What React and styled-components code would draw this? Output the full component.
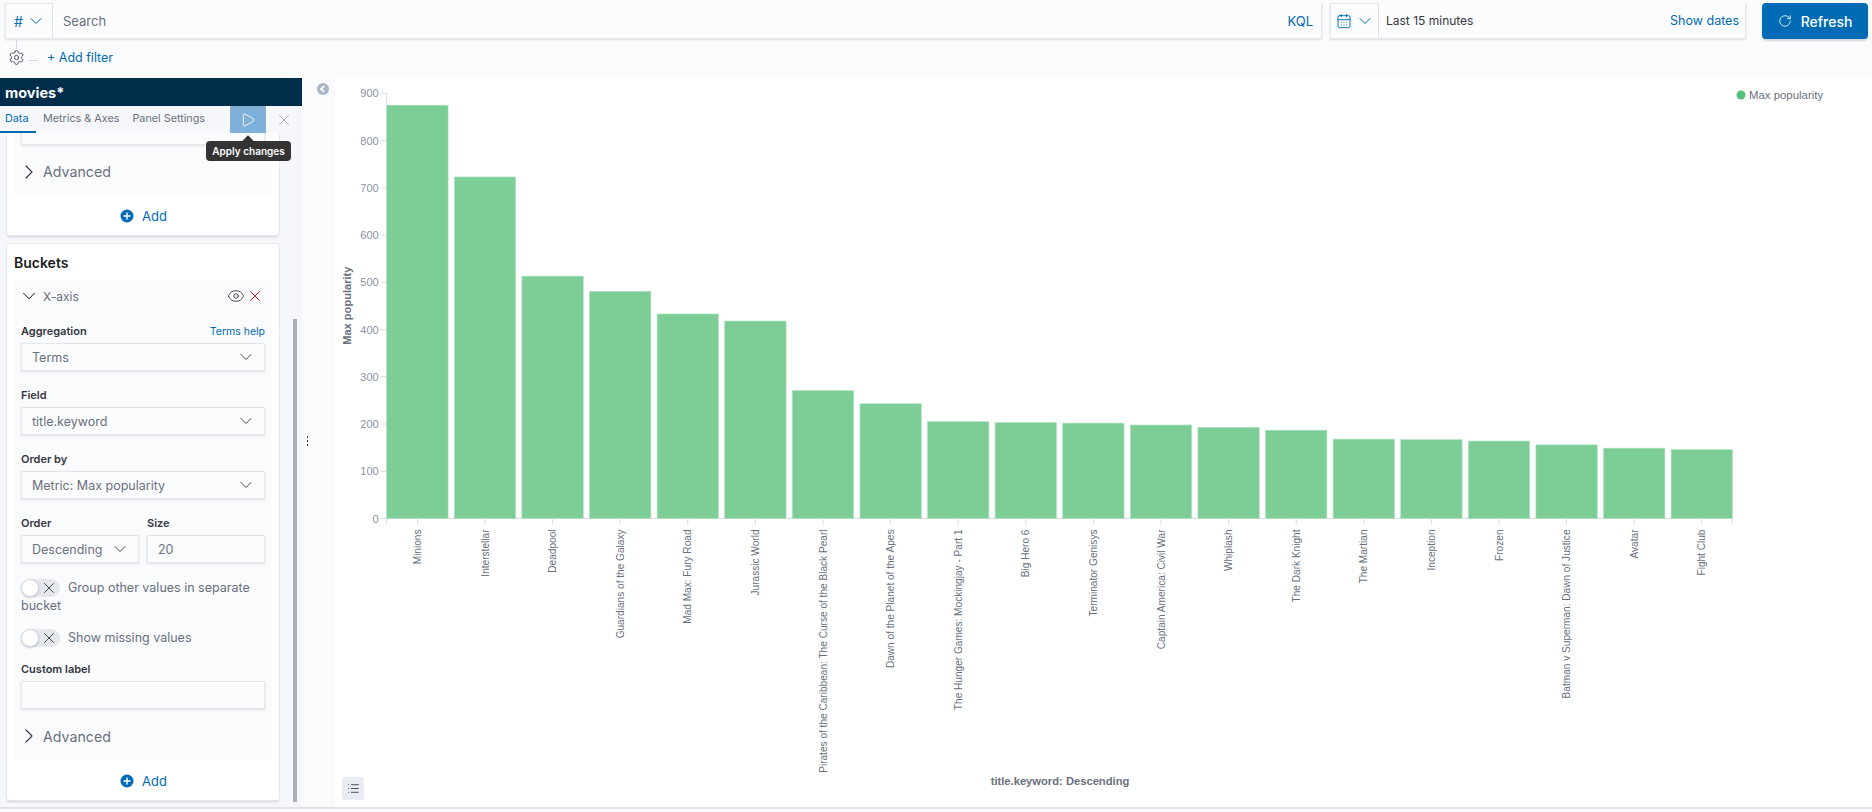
import React from "react";
import styled, { createGlobalStyle } from "styled-components";
import { CalendarDays, ChevronDown, ChevronRight, Eye, List, Play, RotateCw, Settings, X } from "lucide-react";

const GlobalStyle = createGlobalStyle`
  html, body { margin: 0; padding: 0; background: #fafbfd; }
  body { font-family: Inter, "Noto Sans", sans-serif; color: #343741; overflow: hidden; }
`;

const bars = [
  ["Minions", 875], ["Interstellar", 723], ["Deadpool", 513], ["Guardians of the Galaxy", 481],
  ["Mad Max: Fury Road", 433], ["Jurassic World", 418], ["Pirates of the Caribbean: The Curse of the Black Pearl", 271],
  ["Dawn of the Planet of the Apes", 243], ["The Hunger Games: Mockingjay - Part 1", 205], ["Big Hero 6", 203],
  ["Terminator Genisys", 202], ["Captain America: Civil War", 198], ["Whiplash", 193], ["The Dark Knight", 187],
  ["The Martian", 168], ["Inception", 167], ["Frozen", 164], ["Batman v Superman: Dawn of Justice", 156],
  ["Avatar", 149], ["Fight Club", 146],
];

const Page = styled.div`
  width: 1872px;
  height: 812px;
  display: flex;
  flex-direction: column;
  overflow: hidden;
`;

const TopBar = styled.div`
  display: flex;
  align-items: stretch;
  height: 36px;
  padding: 3px 4px 0 5px;
`;

const Group = styled.div`
  box-sizing: border-box;
  display: flex;
  align-items: stretch;
  background: #fbfcfd;
  border: 1px solid #e4e7ec;
  border-top: 0;
  box-shadow: 0 1px 2px rgba(152, 162, 179, 0.35);
  flex: ${(p) => p.$flex || "none"};
  width: ${(p) => p.$width || "auto"};
  margin-right: ${(p) => p.$mr || 0};
`;

const Prepend = styled.div`
  display: flex;
  align-items: center;
  justify-content: center;
  gap: 5px;
  width: ${(p) => p.$width};
  border-right: 1px solid #dfe3e9;
  border-top: 1px solid #e4e7ec;
  color: #006bb4;
  font-size: 14px;
`;

const SearchText = styled.div`
  flex: 1;
  display: flex;
  align-items: center;
  padding-left: 10px;
  font-size: 13px;
  color: #69707d;
`;

const Kql = styled.div`
  display: flex;
  align-items: center;
  padding: 0 8px;
  font-size: 13px;
  color: #006bb4;
`;

const DateText = styled.div`
  flex: 1;
  display: flex;
  align-items: center;
  padding: 0 7px;
  font-size: 12px;
  color: #343741;
`;

const ShowDates = styled.div`
  display: flex;
  align-items: center;
  padding-right: 6px;
  font-size: 12.5px;
  color: #006bb4;
`;

const RefreshButton = styled.button`
  display: flex;
  align-items: center;
  justify-content: center;
  gap: 9px;
  width: 106px;
  border: 0;
  border-radius: 4px;
  background: #006bb4;
  color: #fff;
  font: 500 14px Inter, sans-serif;
  box-shadow: 0 2px 2px rgba(152, 162, 179, 0.4);
`;

const FilterRow = styled.div`
  position: relative;
  height: 36px;
  display: flex;
  align-items: center;
  padding: 0 0 3px 8px;
  font-size: 12.5px;
  color: #006bb4;
  &::before {
    content: "";
    position: absolute;
    left: 16px;
    top: 0;
    width: 1px;
    height: 10px;
    background: #d3dae6;
  }
`;

const FilterDash = styled.span`
  width: 9px;
  height: 1px;
  margin: 6px 9px 0 4px;
  background: #d3dae6;
`;

const Main = styled.div`
  flex: 1;
  display: flex;
  min-height: 0;
  border-bottom: 2px solid #dfe3e9;
  margin-bottom: 3px;
`;

const Sidebar = styled.aside`
  width: 302px;
  display: flex;
  flex-direction: column;
  background: #f5f7fa;
`;

const IndexTitle = styled.div`
  height: 28px;
  display: flex;
  align-items: center;
  padding-left: 5px;
  background: #002d4a;
  color: #fff;
  font-size: 14.5px;
  font-weight: 700;
`;

const Tabs = styled.div`
  position: relative;
  height: 27px;
  display: flex;
  align-items: stretch;
  font-size: 10.8px;
`;

const Tab = styled.div`
  box-sizing: border-box;
  display: flex;
  align-items: center;
  padding: 0 ${(p) => (p.$active ? "5px" : "6px")};
  margin-right: ${(p) => p.$mr || 0};
  color: ${(p) => (p.$active ? "#006bb4" : "#69707d")};
  border-bottom: 2px solid ${(p) => (p.$active ? "#006bb4" : "transparent")};
  min-width: ${(p) => p.$min || 0};
`;

const ApplyButton = styled.div`
  position: absolute;
  left: 230px;
  top: 0;
  width: 36px;
  height: 27px;
  display: flex;
  align-items: center;
  justify-content: center;
  background: #7fb1d8;
  color: #fff;
`;

const CloseTab = styled.div`
  position: absolute;
  left: 275px;
  top: 0;
  width: 18px;
  height: 27px;
  display: flex;
  align-items: center;
  justify-content: center;
  color: #98a2b3;
`;

const Tooltip = styled.div`
  position: absolute;
  left: 206px;
  top: 35px;
  width: 85px;
  height: 20px;
  z-index: 2;
  display: flex;
  align-items: center;
  justify-content: center;
  background: #343434;
  border-radius: 4px;
  color: #fff;
  font-size: 10px;
  font-weight: 600;
  &::before {
    content: "";
    position: absolute;
    left: 38px;
    top: -4px;
    width: 8px;
    height: 8px;
    background: #343434;
    transform: rotate(45deg);
  }
`;

const SideBody = styled.div`
  flex: 1;
  display: flex;
  min-height: 0;
  overflow: hidden;
`;

const Panels = styled.div`
  width: 293px;
  padding: 0 13px 0 6px;
  box-sizing: border-box;
  display: flex;
  flex-direction: column;
  gap: 7px;
`;

const ScrollThumb = styled.div`
  width: 4px;
  height: 483px;
  margin-top: 186px;
  background: #a9aeb9;
`;

const Panel = styled.section`
  background: #fff;
  border: 1px solid #e4e7ec;
  border-top: ${(p) => (p.$clipped ? 0 : "1px solid #e4e7ec")};
  border-radius: ${(p) => (p.$clipped ? "0 0 4px 4px" : "4px")};
  box-shadow: 0 2px 2px -1px rgba(152, 162, 179, 0.4);
  padding: 0 7px;
`;

const PanelTitle = styled.h3`
  margin: 0;
  height: 36px;
  display: flex;
  align-items: center;
  box-sizing: border-box;
  font-size: 14px;
  font-weight: 600;
  color: #1a1c21;
`;

const Accordion = styled.div`
  background: #fafbfd;
  border-radius: 4px;
  padding: 0 7px;
`;

const ClippedInput = styled.div`
  height: 11px;
  background: #fbfcfd;
  border: 1px solid #e4e7ec;
  border-top: 0;
  box-shadow: 0 1px 2px rgba(152, 162, 179, 0.3);
`;

const AccordionHead = styled.div`
  box-sizing: border-box;
  display: flex;
  align-items: center;
  gap: 6px;
  height: ${(p) => p.$height};
  padding: ${(p) => p.$pad || 0};
  color: #69707d;
  font-size: ${(p) => p.$size || "14px"};
  svg { color: #343741; flex: none; }
`;

const HeadActions = styled.div`
  margin-left: auto;
  margin-right: 1px;
  display: flex;
  align-items: center;
  gap: 1px;
`;

const SmallChevron = styled(ChevronDown).attrs({ size: 20, strokeWidth: 1.1 })`
  margin: -2px;
`;

const TopChevron = styled(ChevronDown).attrs({ size: 20, strokeWidth: 1.2 })`
  margin: -2px;
`;

const HeadChevronDown = styled(ChevronDown).attrs({ size: 22, strokeWidth: 1.1 })`
  margin: -3px;
`;

const HeadChevronRight = styled(ChevronRight).attrs({ size: 24, strokeWidth: 1.1 })`
  margin: -4px;
`;

const AddRow = styled.div`
  box-sizing: border-box;
  height: 40px;
  padding-top: 2px;
  display: flex;
  align-items: center;
  justify-content: center;
  gap: 7px;
  font-size: 13px;
  color: #006bb4;
`;

const FieldHead = styled.div`
  display: flex;
  justify-content: space-between;
  align-items: center;
  height: 14px;
  margin-bottom: 5px;
`;

const Label = styled.label`
  font-size: 11px;
  font-weight: 600;
  color: #343741;
`;

const HelpLink = styled.span`
  font-size: 10.5px;
  color: #006bb4;
`;

const Field = styled.div`
  flex: ${(p) => p.$flex || "none"};
  min-width: 0;
  margin-bottom: ${(p) => p.$mb || "17px"};
`;

const Control = styled.div`
  height: 28px;
  box-sizing: border-box;
  display: flex;
  align-items: center;
  justify-content: space-between;
  padding: 0 10px;
  background: #fbfcfd;
  border: 1px solid #e4e7ec;
  box-shadow: 0 1px 2px rgba(152, 162, 179, 0.3);
  font-size: 12.5px;
  color: #69707d;
  svg { color: #343741; flex: none; }
`;

const FieldRow = styled.div`
  display: flex;
  gap: 8px;
`;

const SwitchRow = styled.div`
  font-size: 12.5px;
  line-height: 18px;
  color: #69707d;
  margin-bottom: ${(p) => p.$mb};
`;

const Track = styled.span`
  display: inline-flex;
  vertical-align: top;
  align-items: center;
  justify-content: flex-end;
  width: 39px;
  height: 18px;
  margin-right: 8px;
  padding-right: 2px;
  box-sizing: border-box;
  position: relative;
  background: #e4e7ec;
  border-radius: 9px;
  color: #343741;
  &::before {
    content: "";
    position: absolute;
    left: 0;
    top: 0;
    width: 16px;
    height: 16px;
    background: #fff;
    border: 1px solid #d3dae6;
    border-radius: 50%;
    box-shadow: 0 1px 2px rgba(52, 55, 65, 0.25);
  }
`;

const Resizer = styled.div`
  width: 33px;
  padding: 358px 0 0 5px;
  box-sizing: border-box;
  position: relative;
`;

const CollapseIcon = styled.svg`
  position: absolute;
  left: 14px;
  top: 4px;
`;

const ResizeDots = styled.div`
  width: 1px;
  height: 12px;
  background: repeating-linear-gradient(#343741 0 2px, transparent 2px 4px);
`;

const ChartArea = styled.main`
  flex: 1;
  background: #fff;
  position: relative;
`;

const LegendToggle = styled.button`
  position: absolute;
  left: 7px;
  top: 699px;
  width: 22px;
  height: 23px;
  padding: 0;
  display: flex;
  align-items: center;
  justify-content: center;
  border: 0;
  border-radius: 3px;
  background: #e9edf3;
  color: #343741;
`;

const ChartSvg = styled.svg`
  display: block;
  text {
    font-family: "Liberation Sans", Arial, sans-serif;
  }
`;

const PlusCircle = () => (
  <svg width="16" height="16" viewBox="0 0 16 16">
    <circle cx="8" cy="8" r="6.5" fill="#006bb4" />
    <path d="M8 4.5v7M4.5 8h7" stroke="#fff" strokeWidth="1.4" />
  </svg>
);

const AddButton = () => (
  <AddRow>
    <PlusCircle />
    Add
  </AddRow>
);

const Advanced = ({ height }) => (
  <AccordionHead $height={height} $pad="3px 0 0" $size="14.2px">
    <HeadChevronRight />
    Advanced
  </AccordionHead>
);

const Select = ({ value }) => (
  <Control>
    {value}
    <SmallChevron />
  </Control>
);

const Switch = () => (
  <Track>
    <X size={18} strokeWidth={1.2} />
  </Track>
);

const Chart = () => {
  // chart origin in the white area, values taken off the reference axis
  const x0 = 51.7;
  const y0 = 440.5;
  const unit = 0.4724;
  const pitch = 67.6;
  const barW = 61.4;
  return (
    <ChartSvg width="1537" height="727" viewBox="0 0 1537 727">
      <circle cx="1406" cy="17" r="4.5" fill="#57c17b" />
      <text x="1414" y="21" fontSize="11.4" fill="#69707d">Max popularity</text>
      <text transform="translate(16 227.7) rotate(-90)" textAnchor="middle" fontSize="11.1" fontWeight="700" fill="#69707d">Max popularity</text>
      <text x="725" y="707" textAnchor="middle" fontSize="11.2" fontWeight="700" fill="#69707d">title.keyword: Descending</text>
      <path d={`M${x0} 15.3V${y0 + 6}M${x0} ${y0}H1397M1397 ${y0}v6`} stroke="#d9dce2" strokeWidth="1" fill="none" />
      {[0, 100, 200, 300, 400, 500, 600, 700, 800, 900].map((t) => {
        const y = y0 - t * unit;
        return (
          <g key={t}>
            <line x1={x0 - 6} x2={x0} y1={y} y2={y} stroke="#d9dce2" />
            <text x={x0 - 8} y={y + 4} textAnchor="end" fontSize="11" fill="#8a93a3">{t}</text>
          </g>
        );
      })}
      {bars.map(([name, value], i) => {
        const x = x0 + i * pitch;
        const cx = x + barW / 2;
        return (
          <g key={name}>
            <rect x={x} y={y0 - value * unit} width={barW} height={value * unit} fill="#7dce96" stroke="#b5e3c4" strokeWidth="0.6" />
            <line x1={cx} x2={cx} y1={y0} y2={y0 + 6} stroke="#d9dce2" />
            <text transform={`translate(${cx + 3.5} ${y0 + 11}) rotate(-90)`} textAnchor="end" fontSize="10.1" fill="#69707d">{name}</text>
          </g>
        );
      })}
    </ChartSvg>
  );
};

export default function App() {
  return (
    <Page>
      <GlobalStyle />
      <TopBar>
        <Group $flex="1" $mr="8px">
          <Prepend $width="46px">
            #
            <TopChevron />
          </Prepend>
          <SearchText>Search</SearchText>
          <Kql>KQL</Kql>
        </Group>
        <Group $width="416px" $mr="16px">
          <Prepend $width="47px">
            <CalendarDays size={16} strokeWidth={1.4} />
            <TopChevron />
          </Prepend>
          <DateText>Last 15 minutes</DateText>
          <ShowDates>Show dates</ShowDates>
        </Group>
        <RefreshButton>
          <RotateCw size={14} strokeWidth={1.4} />
          Refresh
        </RefreshButton>
      </TopBar>
      <FilterRow>
        <Settings size={17} strokeWidth={1.2} color="#343741" />
        <FilterDash />
        <span>+ Add filter</span>
      </FilterRow>
      <Main>
        <Sidebar>
          <IndexTitle>movies*</IndexTitle>
          <Tabs>
            <Tab $active $min="36px" $mr="1px">Data</Tab>
            <Tab $mr="1px">Metrics &amp; Axes</Tab>
            <Tab>Panel Settings</Tab>
            <ApplyButton><Play size={16} strokeWidth={1.3} /></ApplyButton>
            <CloseTab><X size={20} strokeWidth={1.1} /></CloseTab>
            <Tooltip>Apply changes</Tooltip>
          </Tabs>
          <SideBody>
            <Panels>
              <Panel $clipped>
                <Accordion>
                  <ClippedInput />
                  <Advanced height="50px" />
                </Accordion>
                <AddButton />
              </Panel>
              <Panel>
                <PanelTitle>Buckets</PanelTitle>
                <Accordion>
                  <AccordionHead $height="44px" $pad="0 0 12px" $size="12px">
                    <HeadChevronDown />
                    X-axis
                    <HeadActions>
                      <Eye size={18} strokeWidth={1.2} />
                      <X size={18} strokeWidth={1.3} color="#bd271e" />
                    </HeadActions>
                  </AccordionHead>
                  <Field>
                    <FieldHead>
                      <Label>Aggregation</Label>
                      <HelpLink>Terms help</HelpLink>
                    </FieldHead>
                    <Select value="Terms" />
                  </Field>
                  <Field>
                    <FieldHead><Label>Field</Label></FieldHead>
                    <Select value="title.keyword" />
                  </Field>
                  <Field $mb="17px">
                    <FieldHead><Label>Order by</Label></FieldHead>
                    <Select value="Metric: Max popularity" />
                  </Field>
                  <FieldRow>
                    <Field $flex="1" $mb="16px">
                      <FieldHead><Label>Order</Label></FieldHead>
                      <Select value="Descending" />
                    </Field>
                    <Field $flex="1" $mb="16px">
                      <FieldHead><Label>Size</Label></FieldHead>
                      <Control>20</Control>
                    </Field>
                  </FieldRow>
                  <SwitchRow $mb="14px"><Switch />Group other values in separate bucket</SwitchRow>
                  <SwitchRow $mb="15px"><Switch />Show missing values</SwitchRow>
                  <Field $mb="0">
                    <FieldHead><Label>Custom label</Label></FieldHead>
                    <Control />
                  </Field>
                  <Advanced height="51px" />
                </Accordion>
                <AddButton />
              </Panel>
            </Panels>
            <ScrollThumb />
          </SideBody>
        </Sidebar>
        <Resizer>
          <CollapseIcon width="14" height="14" viewBox="0 0 14 14">
            <circle cx="7" cy="7" r="6" fill="#abb4c4" />
            <path d="M8.2 3.8 5 7l3.2 3.2" stroke="#fff" strokeWidth="1.8" fill="none" />
          </CollapseIcon>
          <ResizeDots />
        </Resizer>
        <ChartArea>
          <Chart />
          <LegendToggle><List size={13} strokeWidth={1.6} /></LegendToggle>
        </ChartArea>
      </Main>
    </Page>
  );
}
